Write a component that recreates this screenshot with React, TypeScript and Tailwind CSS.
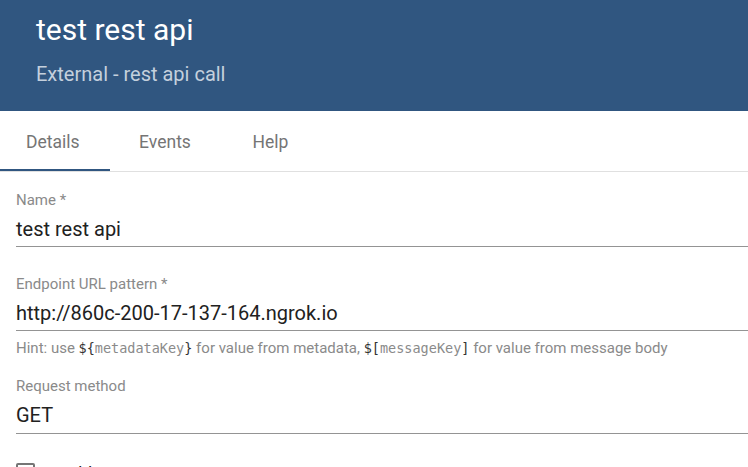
import React from "react";

const font = { fontFamily: "Roboto, 'Noto Sans', sans-serif" };
const mono = { fontFamily: "'DejaVu Sans Mono', monospace" };

function Field({ label, value, extra = "" }: { label: string; value: string; extra?: string }) {
  return (
    <div className={`border-b border-[#949494] ${extra || "pb-[3px]"}`}>
      <div className="text-[15px] leading-[20px] text-[#8a8a8a]">{label}</div>
      <div className="mt-[5px] text-[20px] leading-[28px] text-[#212121]">{value}</div>
    </div>
  );
}

function Code({ open, name, close }: { open: string; name: string; close: string }) {
  return (
    <span className="text-[13.5px]" style={mono}>
      <span className="text-[#333333]">{open}</span>
      <span className="text-[#8a8a8a]">{name}</span>
      <span className="text-[#333333]">{close}</span>
    </span>
  );
}

export default function App() {
  return (
    <div className="w-[748px] h-[467px] overflow-hidden bg-white" style={font}>
      <div className="bg-[#305680] h-[111px] pl-[36px] pt-[12px]">
        <div className="text-[30px] leading-[36px] text-white">test rest api</div>
        <div className="mt-[12px] text-[20px] leading-[28px] text-[#c4d0dd]">External - rest api call</div>
      </div>
      <div className="flex h-[61px] border-b border-[#e0e0e0]">
        <div className="relative w-[110px] flex items-center pl-[26px] pt-[3px] text-[17.5px] text-[#757575]">
          Details
          <div className="absolute left-0 right-0 bottom-0 h-[2px] bg-[#305680]" />
        </div>
        <div className="w-[110px] flex items-center justify-center pt-[3px] text-[17.5px] text-[#757575]">Events</div>
        <div className="w-[101px] flex items-center justify-center pt-[3px] text-[17.5px] text-[#757575]">Help</div>
      </div>
      <div className="pl-[16px]">
        <div className="pt-[18px]">
          <Field label="Name *" value="test rest api" />
        </div>
        <div className="pt-[27px]">
          <Field label="Endpoint URL pattern *" value="http://860c-200-17-137-164.ngrok.io" />
        </div>
        <div className="mt-[7px] text-[15px] leading-[20px] text-[#8a8a8a] whitespace-nowrap">
          Hint: use <Code open="${" name="metadataKey" close="}" /> for value from metadata,{" "}
          <Code open="$[" name="messageKey" close="]" /> for value from message body
        </div>
        <div className="pt-[18px]">
          <Field label="Request method" value="GET" extra="pb-[4px]" />
        </div>
        <div className="mt-[29px] flex items-start gap-[14px]">
          <div className="w-[19px] h-[19px] shrink-0 rounded-[2px] border-2 border-[#757575]" />
          <div className="text-[17.5px] leading-[22px] text-[#212121]">Enable proxy</div>
        </div>
      </div>
    </div>
  );
}
